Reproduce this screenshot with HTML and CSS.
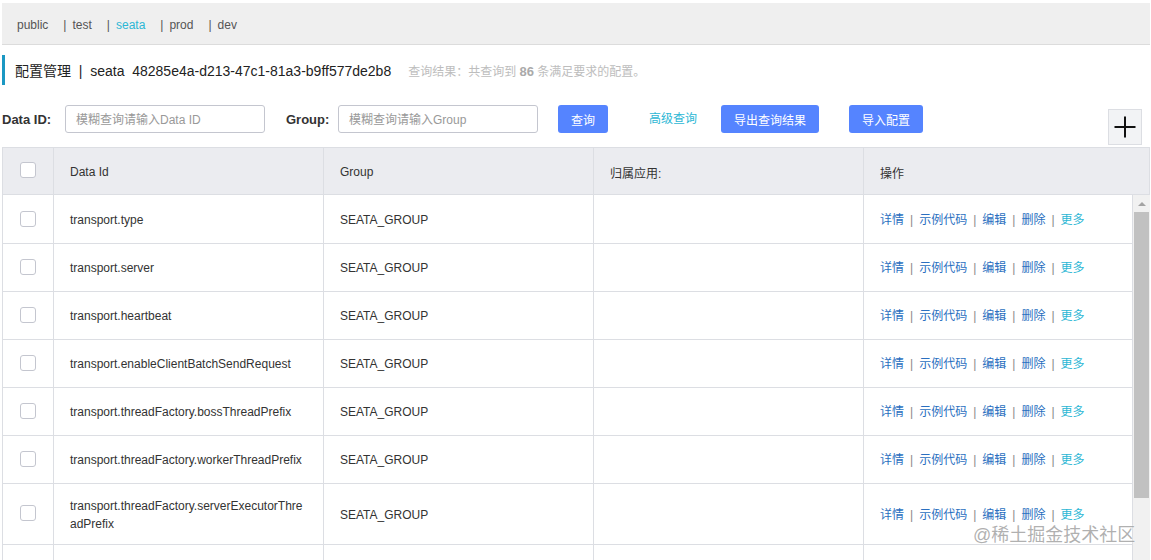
FILE: index.html
```html
<!DOCTYPE html>
<html lang="zh">
<head>
<meta charset="utf-8">
<title>配置管理</title>
<link rel="stylesheet" href="styles.css">
</head>
<body>
<div class="page">
  <div class="tabs">
    <span class="tab">public</span>
    <span class="tab"><span class="sep">|</span>test</span>
    <span class="tab active"><span class="sep">|</span>seata</span>
    <span class="tab"><span class="sep">|</span>prod</span>
    <span class="tab"><span class="sep">|</span>dev</span>
  </div>

  <div class="title">
    <span class="title-main">配置管理 &nbsp;|&nbsp; seata &nbsp;48285e4a-d213-47c1-81a3-b9ff577de2b8</span>
    <span class="title-info">查询结果：共查询到 <b>86</b> 条满足要求的配置。</span>
  </div>

  <div class="search">
    <label class="lbl">Data ID:</label>
    <div class="input">模糊查询请输入Data ID</div>
    <label class="lbl lbl-group">Group:</label>
    <div class="input">模糊查询请输入Group</div>
    <button class="btn btn-query">查询</button>
    <a class="adv">高级查询</a>
    <button class="btn btn-export">导出查询结果</button>
    <button class="btn btn-import">导入配置</button>
    <button class="plus"><svg viewBox="0 0 24 24" width="24" height="24"><path d="M12 1.5v21M1.5 12h21" stroke="#111" stroke-width="2" fill="none"/></svg></button>
  </div>

  <div class="table">
    <table class="thead">
      <colgroup><col class="c-chk"><col class="c-id"><col class="c-grp"><col class="c-app"><col></colgroup>
      <tr>
        <th class="chk"><span class="box"></span></th>
        <th>Data Id</th>
        <th>Group</th>
        <th>归属应用:</th>
        <th>操作</th>
      </tr>
    </table>
    <div class="body-wrap">
      <table class="tbody">
        <colgroup><col class="c-chk"><col class="c-id"><col class="c-grp"><col class="c-app"><col></colgroup>
        <tr><td class="chk"><span class="box"></span></td><td>transport.type</td><td>SEATA_GROUP</td><td></td><td class="ops"><a>详情</a><i>|</i><a>示例代码</a><i>|</i><a>编辑</a><i>|</i><a>删除</a><i>|</i><a class="more">更多</a></td></tr>
        <tr><td class="chk"><span class="box"></span></td><td>transport.server</td><td>SEATA_GROUP</td><td></td><td class="ops"><a>详情</a><i>|</i><a>示例代码</a><i>|</i><a>编辑</a><i>|</i><a>删除</a><i>|</i><a class="more">更多</a></td></tr>
        <tr><td class="chk"><span class="box"></span></td><td>transport.heartbeat</td><td>SEATA_GROUP</td><td></td><td class="ops"><a>详情</a><i>|</i><a>示例代码</a><i>|</i><a>编辑</a><i>|</i><a>删除</a><i>|</i><a class="more">更多</a></td></tr>
        <tr><td class="chk"><span class="box"></span></td><td>transport.enableClientBatchSendRequest</td><td>SEATA_GROUP</td><td></td><td class="ops"><a>详情</a><i>|</i><a>示例代码</a><i>|</i><a>编辑</a><i>|</i><a>删除</a><i>|</i><a class="more">更多</a></td></tr>
        <tr><td class="chk"><span class="box"></span></td><td>transport.threadFactory.bossThreadPrefix</td><td>SEATA_GROUP</td><td></td><td class="ops"><a>详情</a><i>|</i><a>示例代码</a><i>|</i><a>编辑</a><i>|</i><a>删除</a><i>|</i><a class="more">更多</a></td></tr>
        <tr><td class="chk"><span class="box"></span></td><td>transport.threadFactory.workerThreadPrefix</td><td>SEATA_GROUP</td><td></td><td class="ops"><a>详情</a><i>|</i><a>示例代码</a><i>|</i><a>编辑</a><i>|</i><a>删除</a><i>|</i><a class="more">更多</a></td></tr>
        <tr><td class="chk"><span class="box"></span></td><td>transport.threadFactory.serverExecutorThreadPrefix</td><td>SEATA_GROUP</td><td></td><td class="ops"><a>详情</a><i>|</i><a>示例代码</a><i>|</i><a>编辑</a><i>|</i><a>删除</a><i>|</i><a class="more">更多</a></td></tr>
        <tr><td class="chk"><span class="box"></span></td><td></td><td></td><td></td><td></td></tr>
      </table>
      <div class="scrollbar">
        <div class="arrow"></div>
        <div class="thumb"></div>
      </div>
    </div>
  </div>
  <div class="watermark">@稀土掘金技术社区</div>
</div>
</body>
</html>
```

FILE: styles.css
```css
* { box-sizing: border-box; }
html, body { margin: 0; padding: 0; background: #fff; }
body {
  font-family: "Liberation Sans", "Noto Sans CJK SC", sans-serif;
  font-size: 12px;
  color: #333;
  width: 1151px;
  height: 560px;
  overflow: hidden;
}
.page { padding: 3px 1px 0 2px; position: relative; height: 560px; }

.tabs {
  height: 42px;
  background: #efefef;
  border-bottom: 1px solid #dcdcdc;
  display: flex;
  align-items: center;
  padding-left: 15px;
  padding-top: 3px;
  color: #555;
  font-size: 12px;
}
.tab { margin-right: 15px; }
.tab .sep { color: #555; margin-right: 6px; }
.tab.active { color: #2db7d5; }

.title {
  margin-top: 10px;
  height: 30px;
  border-left: 3px solid #1b98c3;
  display: flex;
  align-items: center;
  padding-left: 10px;
}
.title-main { font-size: 14px; color: #222; }
.title-info { margin-left: 17px; color: #bdbdbd; font-size: 12px; padding-top: 1px; }
.title-info b { color: #aaa; font-weight: bold; font-size: 13px; }

.search {
  margin-top: 20px;
  display: flex;
  align-items: flex-start;
  height: 40px;
}
.lbl {
  font-weight: bold;
  font-size: 13px;
  color: #333;
  line-height: 30px;
  width: 63px;
}
.lbl-group { margin-left: 21px; width: 52px; }
.input {
  width: 200px;
  height: 28px;
  border: 1px solid #c4c6cf;
  border-radius: 3px;
  color: #999;
  line-height: 28px;
  padding-left: 10px;
}
.btn {
  height: 28px;
  border: none;
  border-radius: 3px;
  background: #5584ff;
  color: #fff;
  font-family: inherit;
  font-size: 12px;
  padding: 0;
}
.btn-query { width: 50px; margin-left: 20px; }
.adv { color: #2db7d5; line-height: 28px; margin-left: 41px; }
.btn-export { width: 98px; margin-left: 24px; }
.btn-import { width: 74px; margin-left: 30px; }
.plus {
  margin-left: auto;
  margin-right: 8px;
  margin-top: 4px;
  width: 34px;
  height: 36px;
  background: #f2f3f5;
  border: 1px solid #dcdee3;
  padding: 0;
  display: flex;
  align-items: center;
  justify-content: center;
}

.table { margin-top: 2px; }
table { border-collapse: collapse; table-layout: fixed; }
.c-chk { width: 51px; }
.c-id { width: 270px; }
.c-grp { width: 270px; }
.c-app { width: 270px; }
.thead { width: 1148px; background: #ebecf0; }
.thead th {
  height: 47px;
  text-align: left;
  font-weight: normal;
  color: #333;
  padding: 2px 16px 0;
  border: 1px solid #dcdee3;
}
.body-wrap { display: flex; height: 365px; overflow: hidden; }
.tbody { width: 1131px; flex: none; align-self: flex-start; }
.tbody tr { height: 48px; }
.tbody td {
  padding: 13px 16px 11px;
  line-height: 18px;
  border: 1px solid #dcdee3;
  border-top: none;
  word-break: break-all;
  vertical-align: middle;
}
.tbody td.chk, .thead th.chk { padding: 0 0 2px; text-align: center; }
.box {
  display: inline-block;
  width: 16px;
  height: 16px;
  border: 1px solid #c4c6cf;
  border-radius: 3px;
  background: #fff;
  vertical-align: middle;
}
.ops a { color: #2a6fc0; }
.ops a.more { color: #2db7d5; }
.ops i { font-style: normal; color: #888; margin: 0 6px; }

.scrollbar {
  width: 17px;
  flex: none;
  background: #f1f1f1;
  display: flex;
  flex-direction: column;
  align-items: center;
}
.arrow {
  margin-top: 7px;
  width: 0; height: 0;
  border-left: 4px solid transparent;
  border-right: 4px solid transparent;
  border-bottom: 4px solid #a3a3a3;
}
.thumb {
  margin-top: 6px;
  width: 15px;
  height: 286px;
  background: #c1c1c1;
}

.watermark {
  position: absolute;
  left: 973px;
  top: 520px;
  font-size: 18px;
  color: rgba(150,150,150,0.75);
  text-shadow: 0 0 2px #fff;
}
```
